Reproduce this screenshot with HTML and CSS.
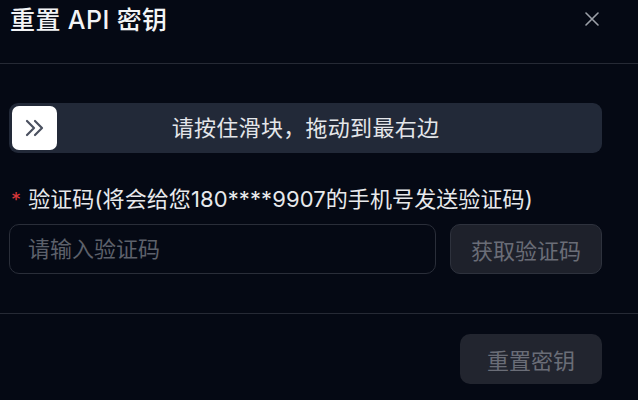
FILE: index.html
```html
<!DOCTYPE html>
<html lang="zh-CN">
<head>
<meta charset="utf-8">
<title>重置 API 密钥</title>
<link rel="stylesheet" href="styles.css">
</head>
<body>
<div class="dialog">
  <div class="dialog-header">
    <h1 class="dialog-title">重置 API 密钥</h1>
    <button class="close-btn" aria-label="关闭">
      <svg width="14" height="14" viewBox="0 0 14 14"><path d="M1 1L13 13M13 1L1 13" stroke="#9ca0a8" stroke-width="1.6" fill="none" stroke-linecap="round"/></svg>
    </button>
  </div>
  <div class="dialog-body">
    <div class="slider">
      <div class="slider-handle">
        <svg width="20" height="18" viewBox="0 0 20 18"><path d="M2 2L9 9L2 16M10 2L17 9L10 16" stroke="#4b5160" stroke-width="2.2" fill="none" stroke-linecap="round" stroke-linejoin="round"/></svg>
      </div>
      <span class="slider-text">请按住滑块，拖动到最右边</span>
    </div>
    <div class="field-label"><span class="req">*</span>验证码(将会给您180****9907的手机号发送验证码)</div>
    <div class="field-row">
      <input class="code-input" type="text" placeholder="请输入验证码">
      <button class="btn btn-code">获取验证码</button>
    </div>
  </div>
  <div class="dialog-footer">
    <button class="btn btn-reset">重置密钥</button>
  </div>
</div>
</body>
</html>
```

FILE: styles.css
```css
* { box-sizing: border-box; }
html, body {
  margin: 0;
  padding: 0;
  background: #050914;
}
body {
  font-family: "Inter", "Noto Sans CJK SC", sans-serif;
  color: #e6e7ea;
  width: 638px;
  height: 400px;
  overflow: hidden;
}
.dialog { width: 638px; }
.dialog-header {
  height: 64px;
  padding: 4px 36px 0 10px;
  display: flex;
  align-items: flex-start;
  justify-content: space-between;
  border-bottom: 1px solid #262a35;
}
.dialog-title {
  margin: 0;
  font-size: 25px;
  line-height: 32px;
  font-weight: 500;
  color: #f3f4f6;
  letter-spacing: 0.4px;
}
.close-btn {
  margin-top: 8px;
  margin-right: 3px;
  width: 14px;
  height: 14px;
  padding: 0;
  border: 0;
  background: none;
  display: flex;
}
.dialog-body {
  padding: 39px 36px 39px 9px;
  border-bottom: 1px solid #262a35;
}
.slider {
  position: relative;
  height: 50px;
  background: #222938;
  border-radius: 9px;
  display: flex;
  align-items: center;
  justify-content: center;
}
.slider-handle {
  position: absolute;
  left: 3px;
  top: 3px;
  width: 45px;
  height: 44px;
  background: #ffffff;
  border-radius: 7px;
  display: flex;
  align-items: center;
  justify-content: center;
}
.slider-text {
  font-size: 22px;
  line-height: 30px;
  color: #e4e6ea;
  letter-spacing: 0.3px;
}
.field-label {
  margin-top: 31px;
  font-size: 22px;
  line-height: 30px;
  color: #e8e9ec;
  padding-left: 2px;
  letter-spacing: 0.1px;
}
.req {
  color: #d9373a;
  font-size: 20px;
  margin-right: 7px;
}
.field-row {
  margin-top: 9px;
  display: flex;
  gap: 14px;
  height: 50px;
}
.code-input {
  flex: 1;
  height: 50px;
  background: transparent;
  border: 1px solid #2a2e39;
  border-radius: 10px;
  padding: 0 18px;
  font-family: inherit;
  font-size: 22px;
  color: #e6e7ea;
  outline: none;
}
.code-input::placeholder { color: #5d616b; }
.btn {
  height: 50px;
  border-radius: 10px;
  font-family: inherit;
  font-size: 22px;
  color: #6a6d77;
  padding: 0;
}
.btn-code {
  width: 152px;
  background: #1e212b;
  border: 1px solid #2e323d;
}
.dialog-footer {
  padding: 20px 36px 0 0;
  display: flex;
  justify-content: flex-end;
}
.btn-reset {
  width: 142px;
  background: #22252f;
  border: 0;
}
```
